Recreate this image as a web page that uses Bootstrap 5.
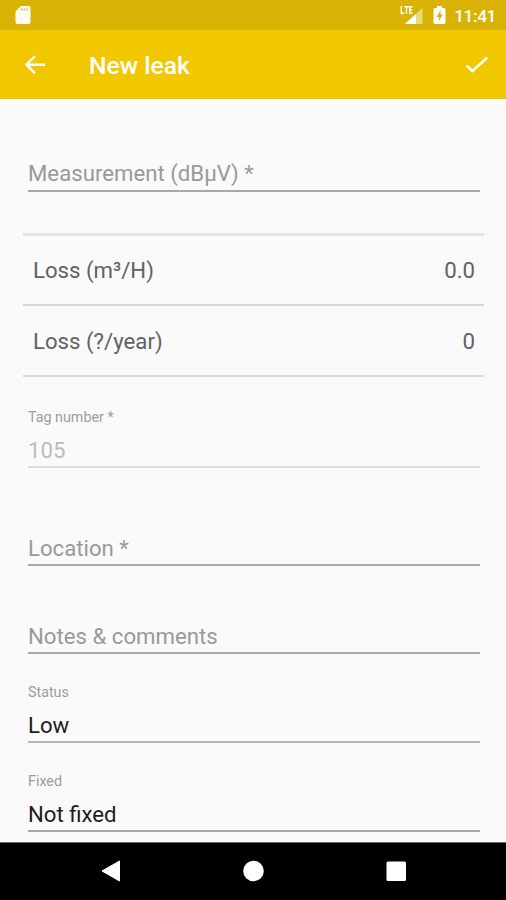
<!DOCTYPE html>
<html lang="en">
<head>
<meta charset="utf-8">
<meta name="viewport" content="width=device-width, initial-scale=1">
<title>New leak</title>
<link rel="stylesheet" href="https://cdn.jsdelivr.net/npm/bootstrap@5.3.0/dist/css/bootstrap.min.css">
<style>
  body { font-family: Roboto, "Noto Sans", sans-serif; background: #fafafa; color: #626262; font-size: 22.2px; line-height: 26px; height: 900px; }
  .status-bar { height: 30px; background: #d8b305; padding: 0 10px 0 15px; }
  .clock { font-size: 17.3px; font-weight: 500; line-height: 28px; margin-left: 8px; padding-top: 2px; letter-spacing: -.4px; }
  .app-bar { height: 69px; background: #f1c800; padding: 0 17px 0 24px; }
  .app-title { font-size: 24.7px; font-weight: 500; line-height: 30px; margin: 2px 0 0 43px; }
  .content { height: 743px; }
  .field { margin: 0 26px 0 28px; border-bottom: 2px solid #a8a8a8; padding-bottom: 3px; color: #999; }
  .field-label { font-size: 14.3px; line-height: 18px; color: #9c9c9c; margin-bottom: 11px; }
  .f-measure { height: 93px; padding-bottom: 4px; }
  .f-tag { height: 91px; border-color: #dcdcdc; color: #bbb; }
  .f-location { height: 98px; }
  .f-notes { height: 88px; }
  .f-status, .f-fixed { height: 89px; color: #1c1c1c; }
  .f-status { border-color: #b5b5b5; }
  .losses { margin: 41px 22px 0 23px; border-top: 3px solid #e4e4e4; }
  .loss-row { height: 71px; border-bottom: 2px solid #d8d8d8; padding: 0 9px 0 10px; }
  .loss-row:first-child { height: 70px; }
  .nav-keys { height: 58px; border-top: 1px solid #666; padding-bottom: 1px; }
  svg { display: block; }
</style>
</head>
<body class="overflow-hidden d-flex flex-column">
  <header class="text-white">
    <div class="status-bar d-flex align-items-center">
      <svg width="16" height="20" viewBox="0 0 16 20"><path fill="#fffdf2" fill-rule="evenodd" d="M6 1h7.500q2 0 2 2v14q0 2-2 2h-11q-2 0-2-2V6.500zM6 3.500v2h1.300v-2zm2.600 0v2h1.300v-2zm2.600 0v2h1.300v-2z"/></svg>
      <svg class="ms-auto" width="24" height="20" viewBox="0 0 24 20"><path fill="#ebd77c" d="M22.500 3v16h-18z"/><path fill="#fff" d="M16 9V19H5z"/><path fill="#d8b305" d="M0 0h13v10H0z"/><path d="M1.300 1v7.200h3.200M4.200 1.800h4.600M6.500 1.800v7M12.500 1.800H9.800v6.300h2.700M9.800 4.800h2.300" fill="none" stroke="#fff" stroke-width="1.400"/></svg>
      <svg width="13" height="20" viewBox="0 0 13 20" style="margin-left: 9px"><path fill="#fff" fill-rule="evenodd" d="M4 1h5v2h2q1.500 0 1.500 1.500v13q0 1.500-1.500 1.500H2q-1.500 0-1.500-1.500v-13Q.5 3 2 3h2zM7.500 5.500L3.500 12h2.400v4l4-6.500H7.500z"/></svg>
      <span class="clock">11:41</span>
    </div>
    <div class="app-bar d-flex align-items-center">
      <svg width="22" height="22" viewBox="0 0 22 22" fill="none" stroke="#fff" stroke-width="2.400"><path d="M21 10.700H3M11 2L2.500 10.700l8.500 8.700"/></svg>
      <h1 class="app-title">New leak</h1>
      <svg class="ms-auto" width="24" height="20" viewBox="0 0 24 20" fill="none" stroke="#fff" stroke-width="2.500"><path d="M1.500 10.500l6 5.500L22.300 2.500"/></svg>
    </div>
  </header>
  <main class="content">
    <div class="field f-measure d-flex flex-column justify-content-end"><span>Measurement (dBµV) *</span></div>
    <div class="losses">
      <div class="loss-row d-flex align-items-center justify-content-between"><span>Loss (m³/H)</span><span>0.0</span></div>
      <div class="loss-row d-flex align-items-center justify-content-between"><span>Loss (?/year)</span><span>0</span></div>
    </div>
    <div class="field f-tag d-flex flex-column justify-content-end"><span class="field-label">Tag number *</span><span>105</span></div>
    <div class="field f-location d-flex flex-column justify-content-end"><span>Location *</span></div>
    <div class="field f-notes d-flex flex-column justify-content-end"><span>Notes &amp; comments</span></div>
    <div class="field f-status d-flex flex-column justify-content-end"><span class="field-label">Status</span><span>Low</span></div>
    <div class="field f-fixed d-flex flex-column justify-content-end"><span class="field-label">Fixed</span><span>Not fixed</span></div>
  </main>
  <nav class="nav-keys bg-black d-flex justify-content-center align-items-center">
    <svg width="306" height="22" viewBox="0 0 306 22" fill="#fff"><path d="M19.500 1v20L2 11z" stroke="#fff" stroke-linejoin="round"/><circle cx="153.500" cy="11" r="10.300"/><rect x="286.500" y="1.500" width="19.500" height="19.500" rx="1.500"/></svg>
  </nav>
<script src="https://cdn.jsdelivr.net/npm/bootstrap@5.3.0/dist/js/bootstrap.bundle.min.js"></script>
</body>
</html>
